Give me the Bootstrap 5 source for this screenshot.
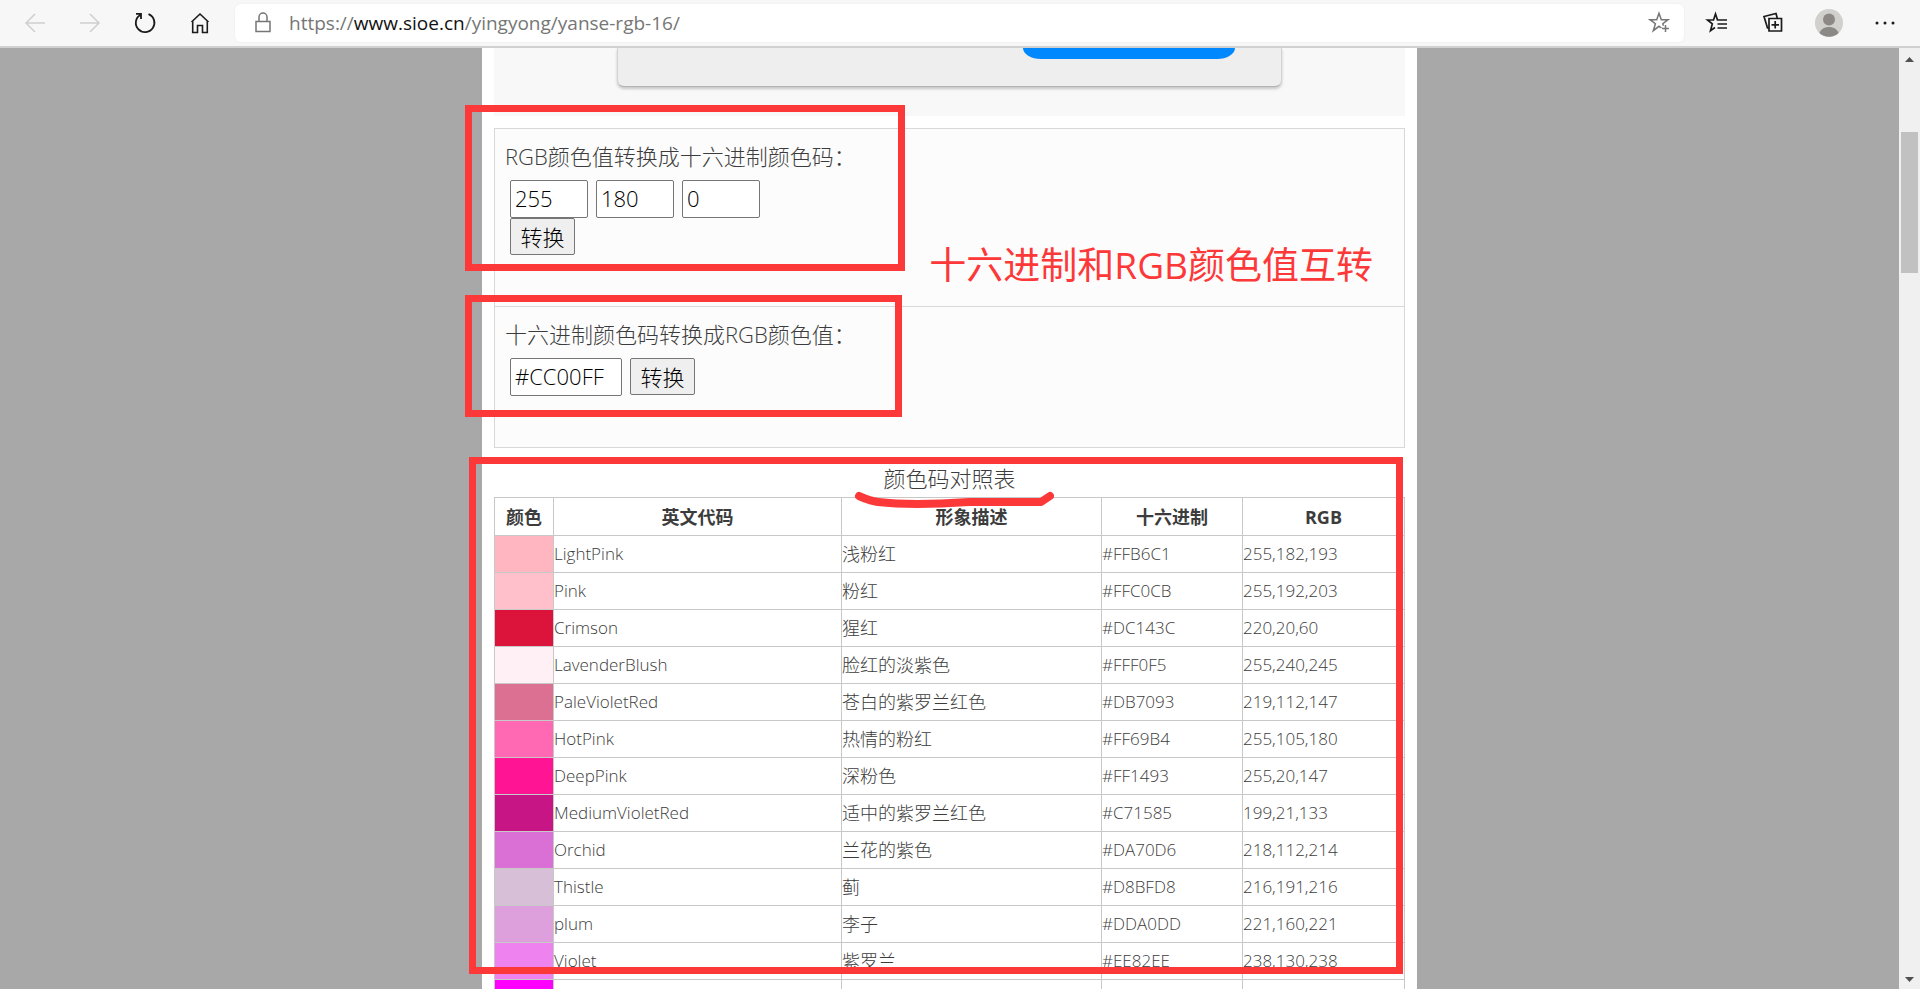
<!DOCTYPE html>
<html lang="zh-CN">
<head>
<meta charset="utf-8">
<meta name="viewport" content="width=device-width, initial-scale=1">
<title>RGB颜色值与十六进制颜色码转换工具</title>
<link href="https://cdn.jsdelivr.net/npm/bootstrap@5.3.0/dist/css/bootstrap.min.css" rel="stylesheet">
<style>
  :root { --note: #fd3838; --line: #c8c8c8; }
  body { font-family: "Open Sans", "Noto Sans CJK SC", sans-serif; font-size: 22px; font-weight: 300; color: #3c3c3c; background: #a8a8a8; }

  .toolbar { height: 48px; background: #f7f7f7; border-bottom: 2px solid #d0d0d0; padding: 0 20px; gap: 25px; }
  .tool { width: 30px; height: 30px; padding: 0; border: 0; background: none; color: #1b1b1b; display: flex; align-items: center; justify-content: center; flex: none; }
  .tool:disabled { color: #cfcfcf; }
  .tool svg, .address svg { fill: none; stroke: currentColor; stroke-width: 1.5; }
  .address { height: 38px; background: #fff; border-radius: 6px; box-shadow: 0 0 3px #0000000d; padding: 0 9px 0 18px; margin-left: -5px; font-weight: 400; font-size: 19px; color: #767676; }
  .address b { font-weight: 400; color: #111; }
  .address .tool { color: #767676; }
  .tools-end { gap: 26px; margin-left: -7px; }

  .sheet { width: 935px; max-width: 100%; background: #fff; padding: 0 12px; }
  .promo { height: 68px; background: #f8f8f8; margin-bottom: 12px; }
  .promo-panel { width: 73%; height: 39px; background: #eee; border: 1px solid #d4d4d4; border-top: 0; border-bottom-color: #b4b4b4; border-radius: 0 0 7px 7px; box-shadow: 0 2px 3px #0003; padding-right: 46px; }
  .promo-btn { width: 212px; height: 11px; background: #08f; border: 0; border-radius: 0 0 18px 18px / 0 0 11px 11px; }

  .converter { border: 1px solid #d8d8d8; background: #fcfcfc; }
  .tool-box { padding: 10px 10px 51px; }
  .tool-box + .tool-box { border-top: 1px solid #d8d8d8; }
  .tool-box label { display: block; line-height: 34px; margin-bottom: 7px; }
  .field-row { padding-left: 5px; gap: 8px; }
  .field, .go { border: 1px solid #767676; border-radius: 2px; color: #000; font-weight: 300; }
  .field { width: 78px; height: 38px; padding: 0 4px 2px; background: #fff; }
  .field-hex { width: 112px; }
  .go { width: 65px; height: 37px; padding: 0; line-height: 32px; background: #efefef; }

  .marked::after { content: ""; position: absolute; border: 7px solid var(--note); pointer-events: none; }
  .mark-rgb::after { left: -30px; top: -24px; width: 440px; height: 166px; }
  .mark-hex::after { left: -30px; top: -12px; width: 437px; height: 122px; }
  .mark-list::after { left: -25px; top: 9px; width: 934px; height: 517px; }
  .note-text { right: 31px; top: 109px; font-size: 37px; line-height: 54px; font-weight: 400; color: var(--note); white-space: nowrap; }
  .scribble { left: -29px; top: 28px; fill: none; stroke: var(--note); stroke-width: 8; stroke-linecap: round; stroke-linejoin: round; }

  .codes { width: 100%; table-layout: fixed; border-collapse: collapse; font-size: 18px; }
  .codes caption { caption-side: top; padding: 12px 0 0; font-size: 22px; line-height: 37px; text-align: center; color: inherit; }
  .codes th, .codes td { border: 1px solid var(--line); padding: 0; line-height: 36px; height: 37px; white-space: nowrap; }
  .codes th { text-align: center; font-weight: 700; height: 38px; }
  .codes td { font-size: 17px; }
  .codes td:nth-child(3) { font-size: 18px; }
  .c-swatch { width: 59px; } .c-name { width: 288px; } .c-desc { width: 260px; } .c-hex { width: 141px; }

  .scroller { width: 21px; background: #f0f0f0; padding: 9px 2px 7px; }
  .scroll-top { flex: 70 1 0; }
  .scroll-thumb { flex: 141 1 0; background: #c1c1c1; }
  .scroll-rest { flex: 704 1 0; }
</style>
</head>
<body class="vh-100 d-flex flex-column overflow-hidden">

<header class="toolbar d-flex align-items-center flex-shrink-0">
  <button class="tool" type="button" aria-label="后退" disabled><svg width="22" height="22" viewBox="0 0 22 22"><path d="M21 11H2M11 2l-9 9 9 9"/></svg></button>
  <button class="tool" type="button" aria-label="前进" disabled><svg width="22" height="22" viewBox="0 0 22 22"><path d="M1 11h19M11 2l9 9-9 9"/></svg></button>
  <button class="tool" type="button" aria-label="刷新"><svg width="24" height="24" viewBox="0 0 24 24"><path d="M15.500 3.200A9.300 9.300 0 1 1 7.500 3.800M3 2.800h5v5.200" stroke-width="1.800"/></svg></button>
  <button class="tool" type="button" aria-label="主页"><svg width="22" height="24" viewBox="0 0 22 24"><path d="M2.500 11L11 3l8.500 8M3.700 10v11.500h4.800v-7h5v7h4.800V10" stroke-width="1.600"/></svg></button>
  <div class="address d-flex align-items-center flex-grow-1">
    <svg class="me-3" width="20" height="24" viewBox="0 0 20 24"><path d="M3 10.500h14v10H3zM6 10.500V6a4 4 0 0 1 8 0v4.500"/></svg>
    <span class="flex-grow-1">https://<b>www.sioe.cn</b>/yingyong/yanse-rgb-16/</span>
    <button class="tool" type="button" aria-label="添加到收藏夹"><svg width="24" height="24" viewBox="0 0 24 24"><path d="M13.500 17L11 15.300 5.300 19.700l2.100-7L2 8.700h6.700L11 2.300l2.300 6.400H20l-5.200 4 .6 2M17.500 14v7M14 17.500h7"/></svg></button>
  </div>
  <div class="tools-end d-flex align-items-center">
    <button class="tool" type="button" aria-label="收藏夹"><svg width="24" height="24" viewBox="0 0 24 24"><path d="M10 16.500l-4.500 3.200 1.800-6.800L2.500 9h6L10.500 3l2 6H22M12.500 13H22M12.500 17H22" stroke-width="1.700"/></svg></button>
    <button class="tool" type="button" aria-label="集锦"><svg width="24" height="24" viewBox="0 0 24 24"><path d="M8 7.500h12.500v12.500H8zM14.200 10v7.500M10.500 13.800H18M8 17H6.500L3 5.500 15 2.500l1.400 5" stroke-width="1.700"/></svg></button>
    <button class="tool" type="button" aria-label="个人资料"><svg width="28" height="28" viewBox="0 0 28 28" style="stroke:none"><circle cx="14" cy="14" r="14" fill="#d2d0cd"/><circle cx="14" cy="10.500" r="6" fill="#8c8885"/><path d="M4.500 24c1.500-4 5-6 9.500-6s8 2 9.500 6a14 14 0 0 1-19 0z" fill="#8c8885"/></svg></button>
    <button class="tool" type="button" aria-label="更多"><svg width="22" height="8" viewBox="0 0 22 8" style="stroke:none"><g fill="#1b1b1b"><circle cx="3" cy="4" r="1.500"/><circle cx="11" cy="4" r="1.500"/><circle cx="19" cy="4" r="1.500"/></g></svg></button>
  </div>
</header>

<div class="d-flex flex-grow-1 overflow-hidden">
  <div class="flex-grow-1 overflow-hidden">
    <main class="sheet mx-auto">
      <div class="promo">
        <div class="promo-panel mx-auto d-flex justify-content-end align-items-start">
          <button class="promo-btn" type="button" aria-label="打开"></button>
        </div>
      </div>

      <div class="converter position-relative">
        <form class="tool-box marked mark-rgb position-relative">
          <label for="red">RGB颜色值转换成十六进制颜色码：</label>
          <div class="field-row d-flex">
            <input class="field" id="red" type="text" value="255">
            <input class="field" type="text" value="180" aria-label="绿">
            <input class="field" type="text" value="0" aria-label="蓝">
          </div>
          <div class="field-row d-flex"><button class="go" type="button">转换</button></div>
        </form>
        <form class="tool-box marked mark-hex position-relative">
          <label for="hex">十六进制颜色码转换成RGB颜色值：</label>
          <div class="field-row d-flex">
            <input class="field field-hex" id="hex" type="text" value="#CC00FF">
            <button class="go" type="button">转换</button>
          </div>
        </form>
        <div class="note-text position-absolute">十六进制和RGB颜色值互转</div>
      </div>

      <div class="marked mark-list position-relative">
        <table class="codes">
          <caption><span class="position-relative d-inline-block">颜色码对照表<svg class="scribble position-absolute" width="200" height="26" viewBox="0 0 200 26"><path d="M5 8C14 12 16 13 24 14C50 17 85 16 115 14L187 14L196 8"/></svg></span></caption>
          <colgroup><col class="c-swatch"><col class="c-name"><col class="c-desc"><col class="c-hex"><col></colgroup>
          <thead><tr><th scope="col">颜色</th><th scope="col">英文代码</th><th scope="col">形象描述</th><th scope="col">十六进制</th><th scope="col">RGB</th></tr></thead>
          <tbody>
            <tr><td style="background:#FFB6C1"></td><td>LightPink</td><td>浅粉红</td><td>#FFB6C1</td><td>255,182,193</td></tr>
            <tr><td style="background:#FFC0CB"></td><td>Pink</td><td>粉红</td><td>#FFC0CB</td><td>255,192,203</td></tr>
            <tr><td style="background:#DC143C"></td><td>Crimson</td><td>猩红</td><td>#DC143C</td><td>220,20,60</td></tr>
            <tr><td style="background:#FFF0F5"></td><td>LavenderBlush</td><td>脸红的淡紫色</td><td>#FFF0F5</td><td>255,240,245</td></tr>
            <tr><td style="background:#DB7093"></td><td>PaleVioletRed</td><td>苍白的紫罗兰红色</td><td>#DB7093</td><td>219,112,147</td></tr>
            <tr><td style="background:#FF69B4"></td><td>HotPink</td><td>热情的粉红</td><td>#FF69B4</td><td>255,105,180</td></tr>
            <tr><td style="background:#FF1493"></td><td>DeepPink</td><td>深粉色</td><td>#FF1493</td><td>255,20,147</td></tr>
            <tr><td style="background:#C71585"></td><td>MediumVioletRed</td><td>适中的紫罗兰红色</td><td>#C71585</td><td>199,21,133</td></tr>
            <tr><td style="background:#DA70D6"></td><td>Orchid</td><td>兰花的紫色</td><td>#DA70D6</td><td>218,112,214</td></tr>
            <tr><td style="background:#D8BFD8"></td><td>Thistle</td><td>蓟</td><td>#D8BFD8</td><td>216,191,216</td></tr>
            <tr><td style="background:#DDA0DD"></td><td>plum</td><td>李子</td><td>#DDA0DD</td><td>221,160,221</td></tr>
            <tr><td style="background:#EE82EE"></td><td>Violet</td><td>紫罗兰</td><td>#EE82EE</td><td>238,130,238</td></tr>
            <tr><td style="background:#FF00FF"></td><td></td><td></td><td></td><td></td></tr>
          </tbody>
        </table>
      </div>
    </main>
  </div>

  <div class="scroller d-flex flex-column flex-shrink-0" aria-hidden="true">
    <svg class="mx-auto" width="9" height="5" viewBox="0 0 9 5"><path d="M0 5L4.500 0 9 5z" fill="#505050"/></svg>
    <div class="scroll-top"></div>
    <div class="scroll-thumb"></div>
    <div class="scroll-rest"></div>
    <svg class="mx-auto" width="9" height="5" viewBox="0 0 9 5"><path d="M0 0L4.500 5 9 0z" fill="#505050"/></svg>
  </div>
</div>

<script src="https://cdn.jsdelivr.net/npm/bootstrap@5.3.0/dist/js/bootstrap.bundle.min.js"></script>
</body>
</html>
